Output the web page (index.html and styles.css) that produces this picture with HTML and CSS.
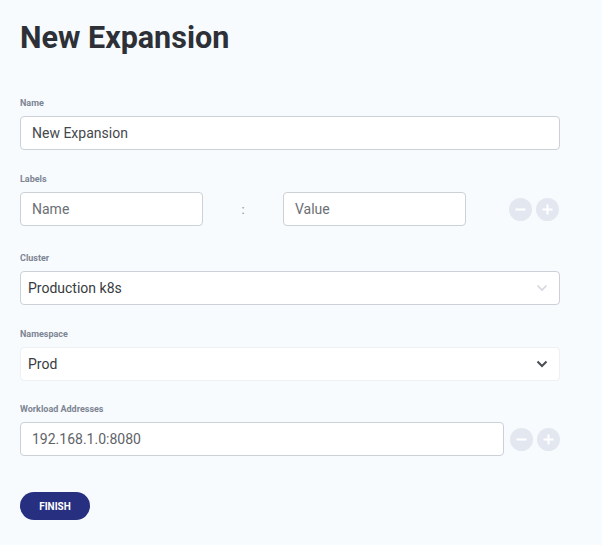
FILE: index.html
```html
<!DOCTYPE html>
<html>
<head>
<meta charset="utf-8">
<link rel="stylesheet" href="styles.css">
</head>
<body>
<div class="page">
  <h1 class="title">New Expansion</h1>
  <div class="field f-name">
    <div class="label">Name</div>
    <div class="input"><span class="val">New Expansion</span></div>
  </div>
  <div class="field f-labels">
    <div class="label">Labels</div>
    <div class="row">
      <div class="input short"><span class="ph">Name</span></div>
      <div class="colon">:</div>
      <div class="input short"><span class="ph">Value</span></div>
      <div class="btns">
        <span class="circ"><svg width="23" height="23" viewBox="0 0 23 23"><circle cx="11.5" cy="11.5" r="11.5" fill="#e3e8f0"/><rect x="6.5" y="10.5" width="10" height="2" fill="#fff"/></svg></span>
        <span class="circ"><svg width="23" height="23" viewBox="0 0 23 23"><circle cx="11.5" cy="11.5" r="11.5" fill="#e3e8f0"/><rect x="6.5" y="10.5" width="10" height="2" fill="#fff"/><rect x="10.5" y="6.5" width="2" height="10" fill="#fff"/></svg></span>
      </div>
    </div>
  </div>
  <div class="field f-cluster">
    <div class="label">Cluster</div>
    <div class="input select"><span class="sel">Production k8s</span>
      <svg class="chev" width="12" height="8" viewBox="0 0 12 8"><path d="M1.5 1.5 L6 6 L10.5 1.5" fill="none" stroke="#d3d7dd" stroke-width="1.6"/></svg>
    </div>
  </div>
  <div class="field f-ns">
    <div class="label">Namespace</div>
    <div class="input select light"><span class="sel">Prod</span>
      <svg class="chev" width="12" height="8" viewBox="0 0 12 8"><path d="M1.5 1.5 L6 6 L10.5 1.5" fill="none" stroke="#4a4d52" stroke-width="2"/></svg>
    </div>
  </div>
  <div class="field f-work">
    <div class="label">Workload Addresses</div>
    <div class="row">
      <div class="input wide"><span class="val2">192.168.1.0:8080</span></div>
      <div class="btns tight">
        <span class="circ"><svg width="23" height="23" viewBox="0 0 23 23"><circle cx="11.5" cy="11.5" r="11.5" fill="#e3e8f0"/><rect x="6.5" y="10.5" width="10" height="2" fill="#fff"/></svg></span>
        <span class="circ"><svg width="23" height="23" viewBox="0 0 23 23"><circle cx="11.5" cy="11.5" r="11.5" fill="#e3e8f0"/><rect x="6.5" y="10.5" width="10" height="2" fill="#fff"/><rect x="10.5" y="6.5" width="2" height="10" fill="#fff"/></svg></span>
      </div>
    </div>
  </div>
  <button class="finish">FINISH</button>
</div>
</body>
</html>
```
FILE: styles.css
```css
html, body {
  margin: 0;
  padding: 0;
  background: #f7fbfe;
}
body {
  font-family: Roboto, "Liberation Sans", sans-serif;
  width: 602px;
  height: 545px;
  overflow: hidden;
}
.page {
  padding: 19px 42px 0 20px;
}
.title {
  margin: 0;
  font-size: 30.5px;
  line-height: 38px;
  font-weight: 700;
  color: #2d3036;
}
.field {
  display: flex;
  flex-direction: column;
}
.f-name { margin-top: 40px; }
.f-labels { margin-top: 23px; }
.f-cluster { margin-top: 26px; }
.f-ns { margin-top: 23px; }
.f-work { margin-top: 22px; }
.label {
  font-size: 9px;
  line-height: 12px;
  font-weight: 700;
  color: #7d8593;
  margin-bottom: 7px;
}
.input {
  box-sizing: border-box;
  height: 34px;
  background: #fff;
  border: 1px solid #ccd0d7;
  border-radius: 4px;
  display: flex;
  align-items: center;
  padding-left: 11px;
  font-size: 14px;
}
.val { color: #45484d; }
.val2 { color: #5f6368; }
.ph { color: #6b6f75; }
.sel { color: #383b40; font-size: 14px; }
.select {
  padding-left: 7px;
  padding-right: 11px;
  justify-content: space-between;
}
.light { border-color: #eef0f3; }
.row {
  display: flex;
  align-items: center;
}
.short { width: 183px; }
.colon {
  width: 80px;
  text-align: center;
  color: #8a8e94;
  font-size: 13px;
}
.wide { width: 484px; }
.btns {
  display: flex;
  gap: 4px;
  margin-left: 43px;
}
.btns.tight { margin-left: 6px; }
.circ { display: block; width: 23px; height: 23px; }
.circ svg { display: block; }
.finish {
  margin-top: 36px;
  width: 70px;
  height: 28px;
  border: none;
  border-radius: 14px;
  background: #272f80;
  color: #fff;
  font-family: Roboto, "Liberation Sans", sans-serif;
  font-weight: 700;
  font-size: 10px;
  padding: 0;
  display: block;
}
```
